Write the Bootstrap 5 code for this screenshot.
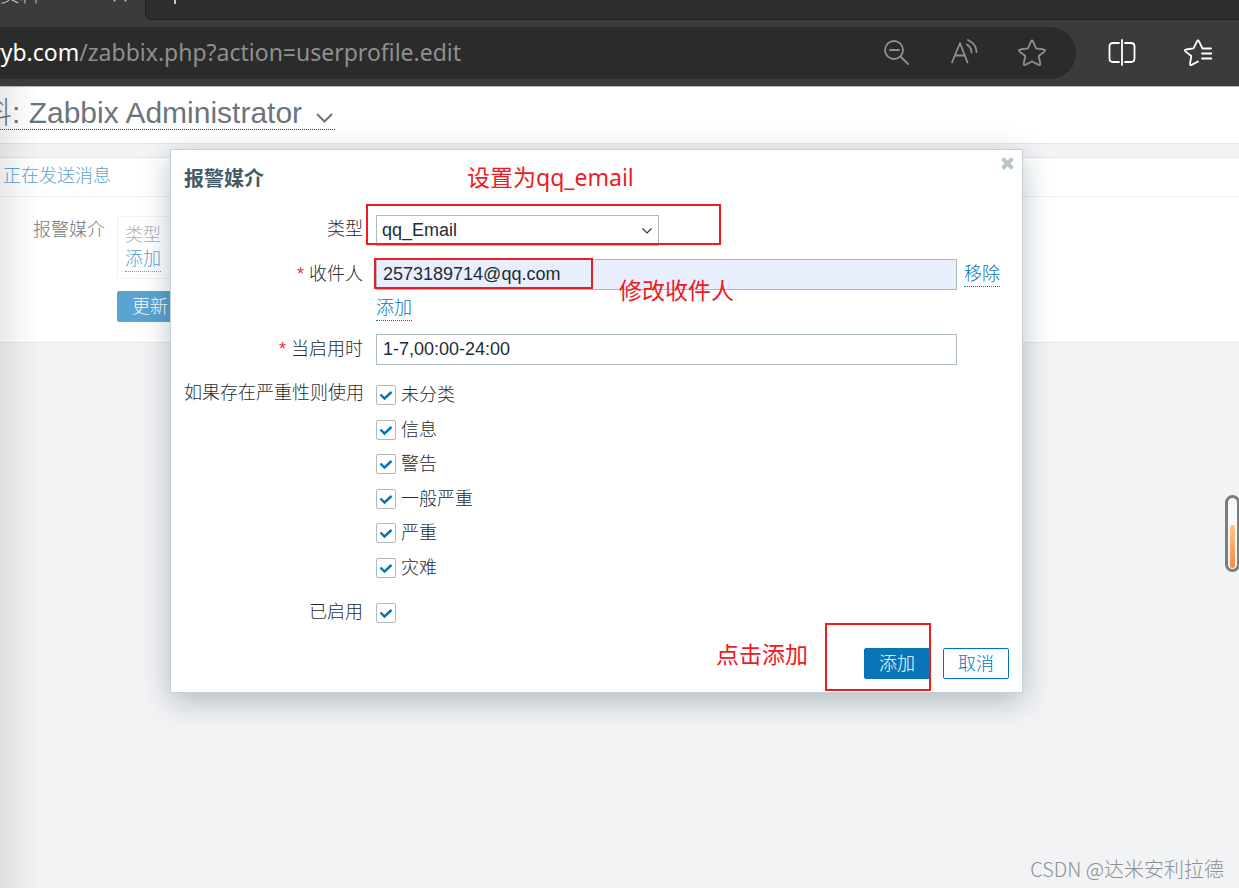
<!DOCTYPE html>
<html lang="zh-CN">
<head>
<meta charset="utf-8">
<meta name="viewport" content="width=device-width, initial-scale=1">
<title>Zabbix Administrator</title>
<link href="https://cdn.jsdelivr.net/npm/bootstrap@5.3.0/dist/css/bootstrap.min.css" rel="stylesheet">
<style>
  body { font-family: "Liberation Sans", "Noto Sans CJK SC", sans-serif; font-size: 18px; line-height: 24px; font-weight: 300; color: #1f2c33; background: #f2f3f5; }
  a { color: #0275b8; }
  .dotted { text-decoration: none; border-bottom: 1px dotted currentColor; display: inline-block; line-height: 23px; }
  /* browser chrome */
  .tabstrip { height: 20px; background: #3b3b3b; color: #c8c8c8; font-size: 20px; line-height: 18px; }
  .tabstrip svg { fill: none; stroke: currentColor; stroke-width: 2; }
  .tab-current { width: 145px; }
  .tab-current span { margin-top: -14px; }
  .tab-rest { background: #2e2e2e; border-bottom: 1px solid #202020; border-left: 1px solid #202020; border-bottom-left-radius: 7px; }
  .toolbar { background: #3b3b3b; padding: 7px 27px 7px 0; border-bottom: 1px solid #b4b4b4; color: #fff; }
  .address { height: 52px; margin-right: 32px; padding-right: 30px; background: #2b2b2b; border-radius: 0 26px 26px 0; color: #8f8f8f; }
  .url { font-family: "Noto Sans", sans-serif; font-size: 23px; line-height: 32px; font-weight: 400; margin: -2px 0 0 -11px; }
  .tool { background: none; border: 0; padding: 0; color: inherit; line-height: 0; }
  .tool svg { fill: none; stroke: currentColor; stroke-width: 1.8; stroke-linecap: round; stroke-linejoin: round; }
  /* page behind the dialog */
  .page { min-height: 801px; }
  .edge-shade { inset: 0 auto 0 0; width: 42px; background: linear-gradient(90deg, rgba(0,0,0,.09), rgba(0,0,0,.03) 50%, transparent); pointer-events: none; }
  .page-head { height: 57px; padding-top: 9px; border-bottom: 1px solid #e6e7e9; }
  .page-title { font-size: 30px; line-height: 33px; color: #6b757b; margin: 0 0 0 -18px; border-bottom: 1px dotted #444; font-weight: 300; }
  .panel { margin-top: 13px; border: 1px solid #e6e7e9; border-width: 1px 0; height: 186px; }
  .panel-tabs { height: 39px; padding: 6px 3px; border-bottom: 1px solid #eff1f2; }
  .faded, .faded a { color: #5ba3d0; }
  .panel-label { width: 105px; color: #71797d; padding-top: 2px; }
  .media-box { border: 1px solid #eff1f2; padding: 6px 7px; width: 500px; height: 63px; color: #a5b1b8; }
  .btn-z { font-size: 18px; line-height: 24px; font-weight: 300; padding: 3px 14px 2px; border-radius: 2px; border: 1px solid #0275b8; color: #0275b8; background: #fff; }
  .btn-z.solid { background: #0a75b9; color: #fff; }
  .btn-z.pale { background: #5ba3d0; border-color: #5ba3d0; color: #fff; margin-top: 12px; }
  /* dialog */
  .dialog-box { top: 62px; left: 170px; right: 216px; background: #fff; border: 1px solid #c5d0d6; box-shadow: 0 8px 28px rgba(0,40,55,.28); padding: 17px 13px 13px; }
  .dialog-box h4 { font-size: 20px; line-height: 24px; font-weight: 700; color: #455b67; margin: 0 0 24px; }
  .closer { top: 7px; right: 8px; }
  .form-grid { display: grid; grid-template-columns: 179px 1fr; column-gap: 13px; }
  .form-grid > label, .form-grid > .lbl { text-align: right; white-space: nowrap; padding-top: 2px; }
  .req { color: #e33734; }
  .field { height: 31px; border: 1px solid #acbbc2; border-radius: 0; padding: 1px 6px; font-size: 18px; line-height: 24px; color: #1f2c33; font-weight: 400; background-color: #fff; }
  .field.wide { width: 581px; }
  .field.filled { background-color: #e8eefc; }
  select.field { width: 283px; padding: 1px 5px 2px; background: #fff url("data:image/svg+xml,%3Csvg xmlns='http://www.w3.org/2000/svg' viewBox='0 0 10 6'%3E%3Cpath d='M.5.5 5 5 9.500.5' fill='none' stroke='%2322333b' stroke-width='1.2'/%3E%3C/svg%3E") no-repeat right 6px center / 10px 6px; appearance: none; }
  .tick { appearance: none; flex: none; width: 20px; height: 20px; margin: 0; border: 1px solid #acbbc2; border-radius: 2px; background: #fff; }
  .tick:checked { background: url("data:image/svg+xml,%3Csvg xmlns='http://www.w3.org/2000/svg' viewBox='0 0 18 18'%3E%3Cpath d='M3.500 8.500 7.500 12.500 14.500 6' fill='none' stroke='%230275b8' stroke-width='2.400'/%3E%3C/svg%3E") center / 18px 18px no-repeat; }
  .sev { height: 197px; padding-top: 4px; }
  .sev label { display: flex; gap: 5px; height: 20px; line-height: 20px; }
  /* red annotations */
  .note { color: #ed1c24; font-family: "Noto Sans", "Noto Sans CJK SC", sans-serif; font-size: 23px; line-height: 30px; font-weight: 400; white-space: nowrap; }
  .frame { border: 2px solid #ed1c24; pointer-events: none; }
  .gauge { right: -1px; top: 408px; width: 15px; height: 77px; border: 3px solid #7b7d7f; border-radius: 8px; background: #fafafa; padding: 27px 2px 1px; }
  .gauge div { height: 100%; border-radius: 2px; background: linear-gradient(#fbc988, #fd8840); }
  .watermark { right: 15px; bottom: 6px; font-family: "Noto Sans CJK SC", sans-serif; font-size: 20px; line-height: 26px; color: #8d8f91; }
</style>
</head>
<body class="overflow-hidden">
<header>
  <div class="tabstrip d-flex overflow-hidden">
    <div class="tab-current d-flex"><span>资料</span><svg class="ms-auto me-3" width="18" height="4" viewBox="0 0 18 4"><path d="m4 0-1 1M14 0l1 1"/></svg></div>
    <div class="tab-rest flex-fill d-flex ps-4"><svg class="ms-1" width="4" height="4" viewBox="0 0 4 4"><path d="M1 0v4"/></svg></div>
  </div>
  <div class="toolbar d-flex align-items-center">
    <div class="address flex-fill d-flex align-items-center">
      <div class="url flex-fill text-nowrap"><span class="text-white">yyb.com</span>/zabbix.php?action=userprofile.edit</div>
      <div class="d-flex" style="gap:40px">
        <button class="tool" aria-label="缩小"><svg width="28" height="28" viewBox="0 0 28 28"><circle cx="12" cy="11" r="9"/><path d="M8 11h9M18.500 17.500 26 25"/></svg></button>
        <button class="tool" aria-label="朗读"><svg width="28" height="28" viewBox="0 0 28 28"><path d="M2 23.500 10 4l7.500 19.500M5 16.500h10M17 5.500c3 2 4.500 5 4.500 8M18 1c5 2.500 8.500 7 8.500 12"/></svg></button>
        <button class="tool" aria-label="收藏"><svg width="28" height="28" viewBox="0 0 28 28"><path d="M13 2.400Q14 .500 15 2.400L18 9.300 26 10.500Q28 11 26.400 12.600L20.700 17 22.300 24.800Q22.400 26.600 20.700 25.900L14 22.500 7.300 25.900Q5.600 26.600 5.700 24.800L7.300 17 1.600 12.600Q0 11 2 10.500L10 9.300Z"/></svg></button>
      </div>
    </div>
    <div class="d-flex" style="gap:48px">
      <button class="tool" aria-label="分屏"><svg width="28" height="28" viewBox="0 0 28 28"><path d="M11 4H5Q1.500 4 1.500 7.500v12Q1.500 23 5 23h6M17 4h6q3.500 0 3.500 3.500v12q0 3.500-3.500 3.500h-6M14 1v25"/></svg></button>
      <button class="tool" aria-label="收藏夹"><svg width="28" height="28" viewBox="0 0 28 28"><path d="M27 9.500h-8.500L15 2.400Q14 .500 13 2.400L9.500 9.300 2 10.500Q0 11 1.600 12.600L7.300 17 6 24.800Q6 26.600 7.700 25.900L14 22.500M18 14.500h9.500M18 19.500h9.500"/></svg></button>
    </div>
  </div>
</header>

<main class="page position-relative">
  <div class="page-head bg-white d-flex align-items-start">
    <h1 class="page-title d-flex">料: Zabbix Administrator
      <svg class="ms-2 mt-2" width="25" height="25" viewBox="0 0 25 25" fill="none" stroke="#6b757b" stroke-width="2"><path d="m7 10 7.500 7.500L22 10"/></svg></h1>
  </div>
  <section class="panel bg-white">
    <div class="panel-tabs faded"><a href="#" class="text-decoration-none">正在发送消息</a></div>
    <div class="d-flex pt-3" style="gap:12px;margin-top:3px">
      <div class="panel-label text-end">报警媒介</div>
      <div>
        <div class="media-box"><div>类型</div><span class="faded"><a href="#" class="dotted">添加</a></span></div>
        <button class="btn-z pale">更新</button>
      </div>
    </div>
  </section>
  <div class="edge-shade position-absolute"></div>

  <form class="dialog-box position-absolute" role="dialog" aria-labelledby="dlg-title">
    <button type="button" class="tool closer position-absolute" aria-label="关闭"><svg width="13" height="13" viewBox="0 0 13 13" style="stroke:#b9c5ca;stroke-width:4;stroke-linecap:butt"><path d="m1.500 1.500 10 10M11.500 1.500l-10 10"/></svg></button>
    <h4 id="dlg-title">报警媒介</h4>
    <span class="note position-absolute" style="left:296px;top:12px">设置为qq_email</span>

    <div class="form-grid">
      <label for="type">类型</label>
      <div class="position-relative mb-3">
        <select id="type" class="field d-block"><option>qq_Email</option></select>
        <div class="frame position-absolute" style="left:-10px;top:-11px;width:355px;height:41px"></div>
      </div>

      <label for="sendto" class="pt-0"><span class="req">*</span> 收件人</label>
      <div class="position-relative">
        <div class="d-flex" style="gap:7px;margin-top:-3px">
          <input id="sendto" type="text" class="field filled wide" value="2573189714@qq.com">
          <span style="padding-top:3px"><a href="#" class="dotted">移除</a></span>
        </div>
        <div class="mb-2" style="padding-top:6px"><a href="#" class="dotted">添加</a></div>
        <div class="frame position-absolute" style="left:-2px;top:-4px;width:219px;height:31px"></div>
        <span class="note position-absolute" style="left:243px;top:13px">修改收件人</span>
      </div>

      <label for="period" class="pt-2"><span class="req">*</span> 当启用时</label>
      <div style="padding-top:5px"><input id="period" type="text" class="field wide d-block" value="1-7,00:00-24:00"></div>

      <div class="lbl pt-3">如果存在严重性则使用</div>
      <div class="sev d-flex flex-column justify-content-between mt-3">
        <label><input type="checkbox" class="tick" checked>未分类</label>
        <label><input type="checkbox" class="tick" checked>信息</label>
        <label><input type="checkbox" class="tick" checked>警告</label>
        <label><input type="checkbox" class="tick" checked>一般严重</label>
        <label><input type="checkbox" class="tick" checked>严重</label>
        <label><input type="checkbox" class="tick" checked>灾难</label>
      </div>

      <label for="enabled" style="margin-top:20px">已启用</label>
      <div class="d-flex" style="padding-top:25px"><input id="enabled" type="checkbox" class="tick" checked></div>
    </div>

    <div class="d-flex justify-content-end position-relative mt-4" style="gap:13px">
      <button type="button" class="btn-z solid">添加</button>
      <button type="button" class="btn-z">取消</button>
      <div class="frame position-absolute" style="right:78px;top:-25px;width:106px;height:68px"></div>
      <span class="note position-absolute" style="right:201px;top:-9px">点击添加</span>
    </div>
  </form>

  <div class="gauge position-absolute"><div></div></div>
  <div class="watermark position-absolute">CSDN @达米安利拉德</div>
</main>
<script src="https://cdn.jsdelivr.net/npm/bootstrap@5.3.0/dist/js/bootstrap.bundle.min.js"></script>
</body>
</html>
